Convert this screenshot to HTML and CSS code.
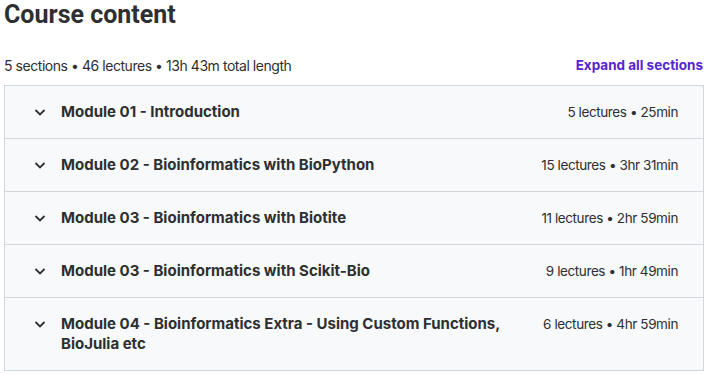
FILE: index.html
```html
<!DOCTYPE html>
<html lang="en">
    <head>
        <title>Course content</title>
        <link rel="stylesheet" href="styles.css">
    </head>
    <body>
        <div id="mainContainer">
            <h2 class="pageTitle">Course content</h2>

            <div class="summaryRow">
                <span class="summaryText">5 sections • 46 lectures • 13h 43m total length</span>
                <span class="expandLink">Expand all sections</span>
            </div>

            <div id="sectionList">
                <div class="sectionRow">
                    <svg class="chevron" viewBox="0 0 16 16"><path d="M3.5 6 L8 10.5 L12.5 6"/></svg>
                    <span class="sectionTitle">Module 01 - Introduction</span>
                    <span class="sectionMeta">5 lectures • 25min</span>
                </div>
                <div class="sectionRow">
                    <svg class="chevron" viewBox="0 0 16 16"><path d="M3.5 6 L8 10.5 L12.5 6"/></svg>
                    <span class="sectionTitle">Module 02 - Bioinformatics with BioPython</span>
                    <span class="sectionMeta">15 lectures • 3hr 31min</span>
                </div>
                <div class="sectionRow">
                    <svg class="chevron" viewBox="0 0 16 16"><path d="M3.5 6 L8 10.5 L12.5 6"/></svg>
                    <span class="sectionTitle">Module 03 - Bioinformatics with Biotite</span>
                    <span class="sectionMeta">11 lectures • 2hr 59min</span>
                </div>
                <div class="sectionRow">
                    <svg class="chevron" viewBox="0 0 16 16"><path d="M3.5 6 L8 10.5 L12.5 6"/></svg>
                    <span class="sectionTitle">Module 03 - Bioinformatics with Scikit-Bio</span>
                    <span class="sectionMeta">9 lectures • 1hr 49min</span>
                </div>
                <div class="sectionRow">
                    <svg class="chevron" viewBox="0 0 16 16"><path d="M3.5 6 L8 10.5 L12.5 6"/></svg>
                    <span class="sectionTitle">Module 04 - Bioinformatics Extra - Using Custom Functions, BioJulia etc</span>
                    <span class="sectionMeta">6 lectures • 4hr 59min</span>
                </div>
            </div>
        </div>
    </body>
</html>
```

FILE: styles.css
```css
body{
    margin: 0;
    background-color: #ffffff;
    color: #2d2f31;
    font-family: Inter, "Noto Sans", sans-serif;
}

#mainContainer{
    display: flex;
    flex-direction: column;
    padding: 0 4px;
}

.pageTitle{
    margin: 0;
    font-family: Roboto, Inter, sans-serif;
    font-size: 25px;
    line-height: 30px;
    font-weight: 700;
}

.summaryRow{
    display: flex;
    justify-content: space-between;
    align-items: center;
    margin-top: 26px;
    height: 18px;
    margin-bottom: 11px;
    font-size: 14px;
}

.summaryText{
    letter-spacing: -0.45px;
}

.expandLink{
    color: #5624d0;
    font-weight: 700;
    font-size: 13.5px;
    margin-right: 1px;
}

#sectionList{
    border: 1px solid #d1d7dc;
    border-bottom: none;
}

.sectionRow{
    display: flex;
    align-items: flex-start;
    padding: 16px 25px 16px 27px;
    background-color: #f7f9fa;
    border-bottom: 1px solid #d1d7dc;
}

.chevron{
    width: 16px;
    height: 16px;
    margin-top: 2px;
    margin-right: 13px;
    flex-shrink: 0;
    fill: none;
    stroke: #2d2f31;
    stroke-width: 1.8;
}

.sectionTitle{
    flex: 1;
    font-size: 15px;
    line-height: 20px;
    font-weight: 700;
    padding-right: 16px;
}

.sectionMeta{
    font-size: 13.5px;
    line-height: 20px;
    letter-spacing: -0.4px;
    white-space: nowrap;
}
```
